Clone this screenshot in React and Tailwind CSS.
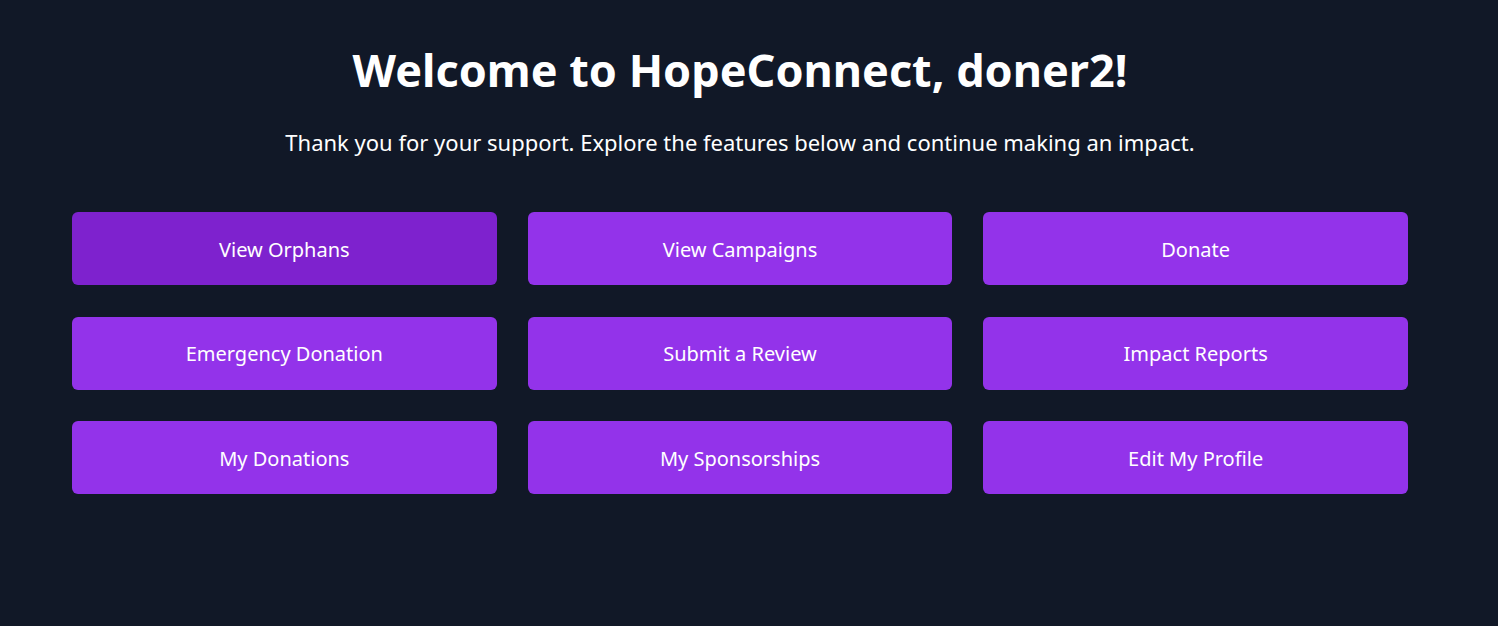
const features = [
  'View Orphans',
  'View Campaigns',
  'Donate',
  'Emergency Donation',
  'Submit a Review',
  'Impact Reports',
  'My Donations',
  'My Sponsorships',
  'Edit My Profile',
];

export default function App() {
  return (
    <div
      className="min-h-screen bg-[#111827] text-white"
      style={{ fontFamily: '"Noto Sans", "Open Sans", sans-serif' }}
    >
      <div className="pl-[72px] pr-[90px] pt-[46px]">
        <h1 className="text-center text-[45px] leading-[48px] font-bold">
          Welcome to HopeConnect, doner2!
        </h1>
        <p className="mt-[34px] text-center text-[22px] leading-[28px]">
          Thank you for your support. Explore the features below and continue
          making an impact.
        </p>
        <div className="mt-[56px] grid grid-cols-3 gap-x-[31px] gap-y-[31.5px]">
          {features.map((f, i) => (
            <button
              key={f}
              className={`h-[73px] pt-[2px] rounded-md text-[20px] text-white ${
                i === 0 ? 'bg-[#7e22ce]' : 'bg-[#9333ea]'
              }`}
            >
              {f}
            </button>
          ))}
        </div>
      </div>
    </div>
  );
}
